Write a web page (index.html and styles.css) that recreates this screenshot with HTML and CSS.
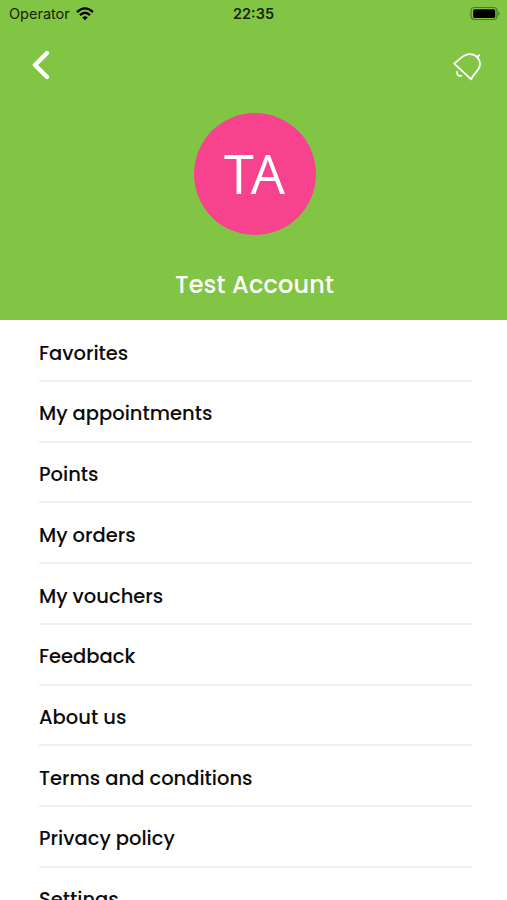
FILE: index.html
```
<!DOCTYPE html>
<html lang="en">
<head>
    <meta charset="UTF-8">
    <meta name="viewport" content="width=device-width, initial-scale=1.0">
    <title>Test Account</title>
    <link rel="stylesheet" href="styles.css">
</head>
<body>
    <header class="profile">
        <div class="status-bar">
            <div class="carrier">
                <span>Operator</span>
                <svg class="wifi" width="18" height="14" viewBox="0 0 18 14">
                    <path d="M1 5.1Q9 -2.3 17 5.1" />
                    <path d="M4 8.1Q9 3.5 14 8.1" />
                    <path class="dot" d="M6.2 10.5Q9 8 11.8 10.5L9 13.3Z" />
                </svg>
            </div>
            <span class="clock">22:35</span>
            <svg class="battery" width="30" height="14" viewBox="0 0 30 14">
                <rect class="shell" x="1" y="0.5" width="26" height="12" rx="3.5" />
                <rect x="3.2" y="2.2" width="22" height="8.8" rx="1.5" />
                <path class="cap" d="M28.2 4.2Q30.6 6.6 28.2 9Z" />
            </svg>
        </div>
        <nav class="nav-bar">
            <button class="icon-button" aria-label="Back">
                <svg width="18" height="30" viewBox="0 0 18 30">
                    <path class="back" d="M15 3L3 15L15 27" />
                </svg>
            </button>
            <button class="icon-button" aria-label="Notifications">
                <svg width="32" height="32" viewBox="0 0 32 32">
                    <path class="bell" d="M2.2 14.6C7 12 9.5 5.7 17.5 5.2Q22 5 25.4 8.3Q29 12.3 27.6 17.5C26.3 22.5 21.5 24.5 19.2 30.4Z" />
                    <path class="bell" d="M24.8 8.3L27.3 6.2" />
                    <path class="bell" d="M5.2 22.8Q4.6 25 6 26.2Q7.6 27.2 9.2 26.6" />
                </svg>
            </button>
        </nav>
        <div class="avatar">TA</div>
        <h1 class="name">Test Account</h1>
    </header>
    <ul class="menu">
        <li>Favorites</li>
        <li>My appointments</li>
        <li>Points</li>
        <li>My orders</li>
        <li>My vouchers</li>
        <li>Feedback</li>
        <li>About us</li>
        <li>Terms and conditions</li>
        <li>Privacy policy</li>
        <li>Settings</li>
    </ul>
</body>
</html>
```
FILE: styles.css
```
* {
    box-sizing: border-box;
}
body {
    margin: 0;
    height: 100vh;
    overflow: hidden;
    background: #fff;
    color: #0c0c0c;
    font-family: Poppins, Inter, "Liberation Sans", sans-serif;
}
.profile {
    height: 320px;
    background: #82c444;
    color: #fff;
    display: flex;
    flex-direction: column;
    align-items: center;
}
.status-bar {
    width: 100%;
    height: 27px;
    padding: 0 7px 0 9px;
    display: grid;
    grid-template-columns: 1fr auto 1fr;
    align-items: center;
    color: #16240a;
    font-family: Inter, sans-serif;
    font-size: 14.5px;
}
.carrier {
    display: flex;
    align-items: center;
    gap: 6px;
}
.wifi {
    fill: none;
    stroke: #000;
    stroke-width: 2.3;
}
.wifi .dot {
    fill: #000;
    stroke: none;
}
.clock {
    margin-right: 2px;
    font-weight: 600;
}
.battery {
    justify-self: end;
    overflow: visible;
}
.battery .shell {
    fill: none;
    stroke: #4d7628;
    stroke-width: 1.2;
}
.battery .cap {
    fill: #4d7628;
}
.nav-bar {
    width: 100%;
    height: 76px;
    padding: 0 23px 0 32px;
    display: flex;
    align-items: center;
    justify-content: space-between;
}
.icon-button {
    padding: 0;
    border: none;
    background: none;
    cursor: pointer;
}
.icon-button svg {
    display: block;
    fill: none;
    stroke: #fff;
}
.back {
    stroke-width: 4.4;
    stroke-linecap: round;
    stroke-linejoin: round;
}
.bell {
    stroke-width: 1.8;
    stroke-linecap: round;
    stroke-linejoin: round;
}
.avatar {
    width: 122px;
    height: 122px;
    margin: 10px 0 0 3px;
    border-radius: 50%;
    background: #f7438e;
    font-family: "Open Sans", sans-serif;
    font-size: 54px;
    line-height: 120px;
    letter-spacing: -3px;
    text-indent: -4px;
    text-align: center;
}
.name {
    margin: 32px 0 0 2px;
    font-size: 24px;
    line-height: 36px;
    font-weight: 500;
    letter-spacing: 0.15px;
}
.menu {
    margin: 0;
    padding: 1.4px 35px 0 39px;
    list-style: none;
}
.menu li {
    height: 60.7px;
    padding-top: 17.4px;
    border-bottom: 2px solid #efefef;
    font-size: 19.5px;
    line-height: 30px;
    font-weight: 500;
}
```
